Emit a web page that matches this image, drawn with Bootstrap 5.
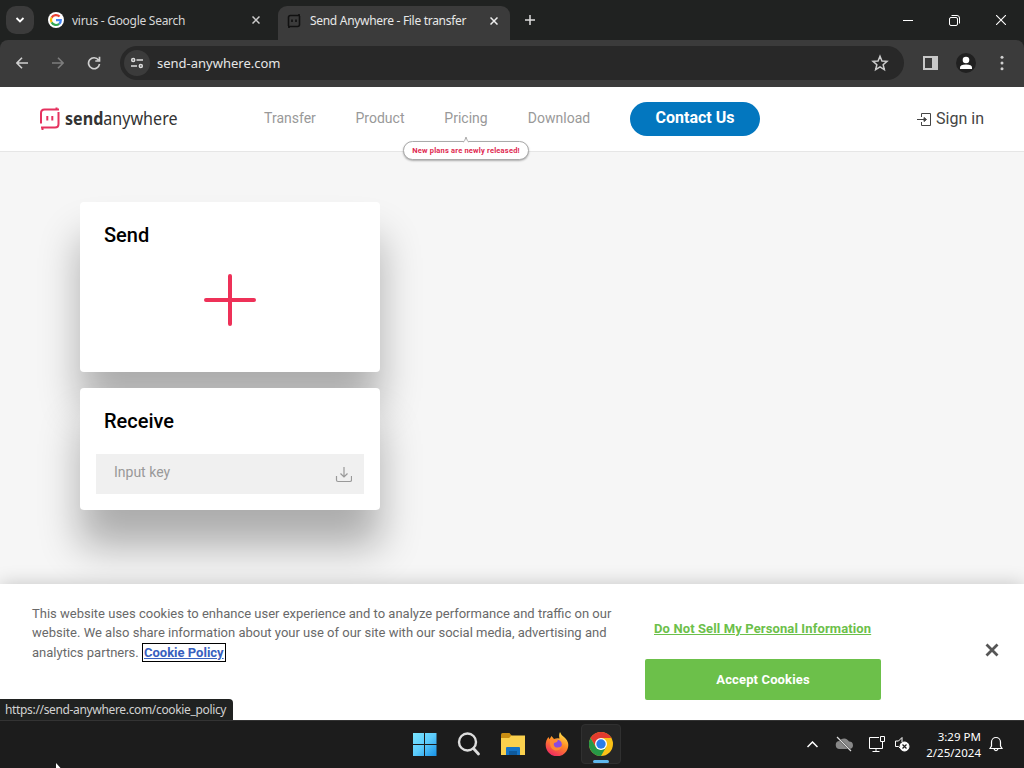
<!DOCTYPE html>
<html lang="en">
<head>
    <meta charset="UTF-8">
    <meta name="viewport" content="width=device-width, initial-scale=1.0">
    <title>Send Anywhere - File transfer</title>
    <!-- Bootstrap CSS -->
    <link href="https://cdn.jsdelivr.net/npm/bootstrap@5.3.0/dist/css/bootstrap.min.css" rel="stylesheet">
    <style>
        body {
            width: 1024px;
            height: 768px;
            overflow: hidden;
            font-family: Roboto, "Liberation Sans", sans-serif;
            background-color: #f6f6f6;
        }
        svg {
            display: block;
            flex: none;
        }
        /* browser window */
        .tab-strip {
            height: 40px;
            background-color: #202221;
            color: #d6d6d6;
            font: 12px "Noto Sans", sans-serif;
        }
        .tab-search {
            width: 28px;
            height: 28px;
            margin: 6px 0 0 6px;
            border-radius: 10px;
            background-color: #3b3b3b;
        }
        .tab-idle {
            width: 226px;
            height: 40px;
            padding-left: 14px;
        }
        .tab-idle span, .tab-active span {
            white-space: nowrap;
        }
        .tab-idle span {
            letter-spacing: -0.28px;
            margin-left: 8px;
        }
        .tab-active {
            width: 232px;
            height: 34px;
            margin: 6px 0 0 18px;
            padding: 0 8px 5px 9px;
            border-radius: 9px 9px 0 0;
            background-color: #3b3b3b;
            color: #e8e8e8;
        }
        .tab-active span {
            margin-left: 9px;
            letter-spacing: -0.3px;
        }
        .new-tab {
            padding-left: 15px;
        }
        .window-buttons {
            gap: 36px;
            padding-right: 18px;
        }
        .address-row {
            height: 47px;
            padding: 0 10px 2px;
            background-color: #3b3b3b;
            border-radius: 8px 8px 0 0;
        }
        .address-wrap {
            background-color: #202221;
        }
        .nav-slot {
            width: 24px;
        }
        .nav-buttons {
            gap: 12px;
        }
        .omnibox {
            width: 784px;
            height: 34px;
            margin-left: 14px;
            padding: 0 15px 0 4px;
            border-radius: 17px;
            background-color: #282828;
            color: #e6e6e6;
            font: 13px "Noto Sans", sans-serif;
        }
        .site-info {
            width: 26px;
            height: 26px;
            margin-right: 7px;
            border-radius: 50%;
            background-color: #3b3b3b;
        }
        .address-tools {
            padding-right: 9px;
        }
        .account-icon {
            margin: 0 23px 0 18px;
        }
        /* site header */
        .site-header {
            height: 65px;
            padding: 0 40px 0 39px;
            background-color: #fff;
            border-bottom: 1px solid #e6e6e6;
        }
        .site-menu {
            margin-left: 67px;
            padding-bottom: 2px;
            font-size: 14px;
            color: #999;
        }
        .site-menu a {
            color: #999;
            text-decoration: none;
            text-align: center;
        }
        .menu-transfer { width: 84px; }
        .menu-product { width: 96px; }
        .menu-pricing { width: 76px; }
        .menu-download { width: 110px; }
        .plan-note {
            position: absolute;
            top: 33px;
            left: -25px;
            width: 126px;
            height: 19px;
            border: 1px solid #aaa;
            border-radius: 10px;
            background-color: #fff;
            box-shadow: 0 1px 2px rgba(0, 0, 0, .3);
            color: #e0284f;
            font-size: 7.5px;
            font-weight: 700;
            line-height: 18px;
            letter-spacing: .2px;
            white-space: nowrap;
        }
        .plan-note svg {
            position: absolute;
            left: 59px;
            top: -6px;
        }
        .btn-contact {
            width: 130px;
            height: 34px;
            margin-left: 16px;
            padding: 0 0 3px;
            border: 0;
            border-radius: 17px;
            background-color: #0377bf;
            color: #fff;
            font-size: 16px;
            font-weight: 700;
            line-height: 31px;
        }
        .sign-in {
            font-size: 16px;
            color: #444;
        }
        /* transfer widgets */
        .site-main {
            height: 432px;
            padding: 50px 0 0 80px;
        }
        .transfer-box {
            width: 300px;
            border-radius: 4px;
            background-color: #fff;
            box-shadow: 0 36px 40px rgba(0, 0, 0, .3);
            color: #000;
        }
        .box-send {
            height: 170px;
        }
        .box-receive {
            height: 122px;
            margin-top: 16px;
            position: relative;
        }
        .transfer-box h2 {
            margin: 0;
            padding: 21px 24px 0;
            font-size: 20px;
            font-weight: 500;
            line-height: 25px;
        }
        .send-plus {
            margin: 26px auto 0;
        }
        .key-field {
            width: 268px;
            height: 40px;
            margin: 20px 16px 0;
            padding: 0 12px 0 18px;
            background-color: #f0f0f0;
            color: #999;
            font-size: 14px;
        }
        .key-field span {
            padding-bottom: 4px;
        }
        /* cookie banner */
        .cookie-bar {
            position: relative;
            height: 136px;
            background-color: #fff;
            box-shadow: 0 0 18px rgba(0, 0, 0, .2);
            color: #696969;
            font-size: 13px;
            line-height: 19.5px;
        }
        .cookie-text {
            width: 613px;
            margin: 0;
            padding: 19.6px 0 0 32px;
            white-space: nowrap;
        }
        .cookie-text a {
            margin-left: 2px;
            color: #3860be;
            font-weight: 700;
            outline: 1px solid #000;
            outline-offset: 1px;
        }
        .cookie-actions {
            width: 236px;
            margin-left: 32px;
            padding-top: 35px;
        }
        .cookie-actions a {
            margin-left: 9px;
            color: #6cc04a;
            font-weight: 700;
            letter-spacing: .12px;
            white-space: nowrap;
        }
        .btn-accept {
            height: 41px;
            margin-top: 20px;
            padding: 2px 0 0;
            border: 0;
            border-radius: 2px;
            background-color: #6cc04a;
            color: #fff;
            font-size: 13px;
            font-weight: 700;
            letter-spacing: .14px;
        }
        .cookie-close {
            margin: 0 25px 4px auto;
        }
        .status-url {
            position: absolute;
            left: 0;
            bottom: 0;
            width: 233px;
            height: 21px;
            padding-left: 5px;
            border-radius: 0 4px 0 0;
            background-color: #202221;
            color: #d2d2d2;
            font: 12px/21px "Noto Sans", sans-serif;
            letter-spacing: -.34px;
            white-space: nowrap;
        }
        /* taskbar */
        .task-bar {
            position: relative;
            height: 48px;
            padding-bottom: 1px;
            background-color: #1c1c1c;
            border-top: 1px solid #333;
            color: #fff;
        }
        .task-apps {
            margin-left: 405px;
        }
        .task-cell {
            width: 40px;
            height: 40px;
            margin-right: 4px;
        }
        .task-cell.is-open {
            position: relative;
            border-radius: 4px;
            border: 1px solid #303030;
            background-color: #262626;
        }
        .task-cell.is-open::after {
            content: "";
            position: absolute;
            left: 11px;
            bottom: 0;
            width: 16px;
            height: 3px;
            border-radius: 2px;
            background-color: #5fb8ee;
        }
        .task-tray {
            padding-right: 21px;
        }
        .task-cloud {
            margin: 0 15px 0 17px;
        }
        .task-clock {
            width: 62px;
            margin-left: 8px;
            padding-top: 1px;
            font: 11.5px/16px "Noto Sans", sans-serif;
            letter-spacing: .02px;
            text-align: right;
            white-space: nowrap;
        }
        .cursor-tip {
            position: absolute;
            left: 56px;
            bottom: 0;
        }
    </style>
</head>
<body>
<!-- Tabs -->
<div class="tab-strip d-flex">
    <div class="tab-search d-flex align-items-center justify-content-center">
        <svg width="10" height="8" viewBox="0 0 10 8" fill="none" stroke="#fff" stroke-width="1.8"><path d="M1.5 2 5 5.5 8.5 2"/></svg>
    </div>
    <div class="tab-idle d-flex align-items-center">
        <svg width="16" height="16" viewBox="0 0 16 16" fill="none" stroke-width="2.2">
            <circle cx="8" cy="8" r="8" fill="#fff"/>
            <path d="M11.6 4.6A5 5 0 0 0 3.6 5.6" stroke="#ea4335"/>
            <path d="M3.6 5.6a5 5 0 0 0 0 4.8" stroke="#fbbc05"/>
            <path d="M3.6 10.4a5 5 0 0 0 7.6 1.4" stroke="#34a853"/>
            <path d="M11.2 11.8A4.6 4.6 0 0 0 12.8 8.2H8" stroke="#4285f4"/>
        </svg>
        <span>virus - Google Search</span>
        <svg class="ms-auto" width="8" height="8" viewBox="0 0 8 8" stroke="#ccc" stroke-width="1.5"><path d="m.5.5 7 7m0-7-7 7"/></svg>
    </div>
    <div class="tab-active d-flex align-items-center">
        <svg width="14" height="14" viewBox="0 0 14 14" fill="none" stroke="#111" stroke-width="1.6">
            <path d="M1.500 12V3.500q0-2 2-2H13M12.500 2v8.500q0 2-2 2H1M12 0v2M2 12v2M5 5.500V8M9 5.500V8"/>
        </svg>
        <span>Send Anywhere - File transfer</span>
        <svg class="ms-auto me-1" width="8" height="8" viewBox="0 0 8 8" stroke="#eee" stroke-width="1.5"><path d="m.5.5 7 7m0-7-7 7"/></svg>
    </div>
    <div class="new-tab d-flex align-items-center">
        <svg width="10" height="10" viewBox="0 0 10 10" stroke="#ddd" stroke-width="1.5"><path d="M5 0v10M0 5h10"/></svg>
    </div>
    <div class="window-buttons d-flex align-items-center ms-auto">
        <svg width="10" height="10" viewBox="0 0 10 10" stroke="#fff"><path d="M0 5.5h10"/></svg>
        <svg width="11" height="11" viewBox="0 0 11 11" fill="none" stroke="#fff">
            <rect x=".5" y="2.5" width="8" height="8" rx="1.5"/><path d="M2.500.5H8q2.500 0 2.500 2.500v5.500"/>
        </svg>
        <svg width="10" height="10" viewBox="0 0 10 10" stroke="#fff" stroke-width="1.1"><path d="m0 0 10 10m0-10L0 10"/></svg>
    </div>
</div>

<!-- Address bar -->
<div class="address-wrap">
    <div class="address-row d-flex align-items-center">
        <div class="nav-buttons d-flex align-items-center">
            <div class="nav-slot d-flex justify-content-center">
                <svg width="12" height="12" viewBox="0 0 12 12" fill="none" stroke="#d0d0d0" stroke-width="1.6"><path d="M12 6H1M6 .8.900 6 6 11.200"/></svg>
            </div>
            <div class="nav-slot d-flex justify-content-center">
                <svg width="12" height="12" viewBox="0 0 12 12" fill="none" stroke="#7d7d7d" stroke-width="1.6"><path d="M0 6h11M6 .8 11.100 6 6 11.200"/></svg>
            </div>
            <div class="nav-slot d-flex justify-content-center">
                <svg width="14" height="14" viewBox="0 0 14 14" fill="none" stroke="#d0d0d0" stroke-width="1.700"><path d="M11.500 4A5.500 5.500 0 1 0 12.500 8M12.500.8v4.200H8.300"/></svg>
            </div>
        </div>
        <div class="omnibox d-flex align-items-center">
            <div class="site-info d-flex align-items-center justify-content-center">
                <svg width="14" height="12" viewBox="0 0 14 12" fill="none" stroke="#ddd" stroke-width="1.5"><circle cx="3.200" cy="3" r="1.500"/><path d="M6.500 3H13M1 9h6"/><circle cx="10.800" cy="9" r="1.500"/></svg>
            </div>
            <span>send-anywhere.com</span>
            <svg class="ms-auto" width="18" height="18" viewBox="0 0 24 24" fill="none" stroke="#ccc" stroke-width="2"><path d="m12 3 2.600 6.300 6.700.5-5.100 4.400 1.600 6.600-5.800-3.600-5.800 3.600 1.600-6.600-5.100-4.400 6.700-.5z"/></svg>
        </div>
        <div class="address-tools d-flex align-items-center ms-auto">
            <svg width="15" height="14" viewBox="0 0 15 14"><rect x="1" y="1" width="13" height="12" fill="none" stroke="#c8c8c8" stroke-width="2"/><path fill="#c8c8c8" d="M9 1h5v12H9z"/></svg>
            <svg class="account-icon" width="20" height="20" viewBox="0 0 20 20"><circle cx="10" cy="10" r="10" fill="#202020"/><circle cx="10" cy="7" r="3.300" fill="#fff"/><path d="M4 16v-1.500Q4 11.500 10 11.500t6 3V16z" fill="#fff"/></svg>
            <svg width="6" height="16" viewBox="0 0 6 16" fill="#d0d0d0"><circle cx="3" cy="2.300" r="1.500"/><circle cx="3" cy="8" r="1.500"/><circle cx="3" cy="13.700" r="1.500"/></svg>
        </div>
    </div>
</div>

<!-- Site header -->
<header class="site-header d-flex align-items-center">
    <svg width="142" height="26" viewBox="0 0 142 26">
        <g fill="none" stroke="#e5325f" stroke-width="2">
            <path d="M2 17.500V7q0-3.500 3.500-3.500H20M19.500 6v12q0 3.500-3.500 3.500H2"/>
            <path d="M8.300 10v4.500M13.300 10v4.500"/>
            <path d="M17.500 1.500v2M3.500 21.500V24"/>
        </g>
        <text transform="translate(26 19) scale(.87 1)" font-family="'Noto Sans', sans-serif" font-size="18.500" fill="#333"><tspan font-weight="700">send</tspan>anywhere</text>
    </svg>
    <nav class="site-menu d-flex">
        <a class="menu-transfer" href="#">Transfer</a>
        <a class="menu-product" href="#">Product</a>
        <div class="menu-pricing position-relative text-center">
            <a href="#">Pricing</a>
            <div class="plan-note text-center">New plans are newly released!
                <svg width="6" height="7" viewBox="0 0 6 7" fill="#fff" stroke="#aaa"><path d="M0 6.500Q2 5 3 1q1 4 3 5.500"/></svg>
            </div>
        </div>
        <a class="menu-download" href="#">Download</a>
    </nav>
    <a class="btn btn-contact" href="#">Contact Us</a>
    <a class="sign-in d-flex align-items-center ms-auto text-decoration-none" href="#">
        <svg class="me-1" width="15" height="15" viewBox="0 0 15 15" fill="none" stroke="#444"><path d="M4.500 5V1.500h9v12h-9V10M0 7.500h8"/><path fill="#444" d="M7 5.500 9.500 7.500 7 9.500z"/></svg>
        Sign in
    </a>
</header>

<!-- Send and receive -->
<main class="site-main">
    <section class="transfer-box box-send">
        <h2>Send</h2>
        <svg class="send-plus" width="52" height="52" viewBox="0 0 52 52" stroke="#ee3158" stroke-width="4" stroke-linecap="round"><path d="M26 2v48M2 26h48"/></svg>
    </section>
    <section class="transfer-box box-receive">
        <h2>Receive</h2>
        <div class="key-field d-flex align-items-center justify-content-between">
            <span>Input key</span>
            <svg width="17" height="17" viewBox="0 0 17 17" fill="none" stroke="#999" stroke-width="1.200"><path d="M9 1v10M5.500 7.500 9 11l3.500-3.500M1.500 10v4q0 1.500 1.500 1.500h12q1.500 0 1.500-1.500v-4"/></svg>
        </div>
    </section>
</main>

<!-- Cookie banner -->
<div class="cookie-bar d-flex">
    <p class="cookie-text">This website uses cookies to enhance user experience and to analyze performance and traffic on our<br>website. We also share information about your use of our site with our social media, advertising and<br>analytics partners. <a href="#">Cookie Policy</a></p>
    <div class="cookie-actions d-flex flex-column">
        <a href="#">Do Not Sell My Personal Information</a>
        <button class="btn btn-accept" type="button">Accept Cookies</button>
    </div>
    <svg class="cookie-close align-self-center" width="14" height="14" viewBox="0 0 14 14" stroke="#565656" stroke-width="2.800"><path d="m1.500 1.500 11 11m0-11-11 11"/></svg>
    <div class="status-url">https://send-anywhere.com/cookie_policy</div>
</div>

<!-- Taskbar -->
<div class="task-bar d-flex align-items-center">
    <div class="task-apps d-flex">
        <div class="task-cell d-flex align-items-center justify-content-center">
            <svg width="24" height="24" viewBox="0 0 24 24">
                <defs><linearGradient id="winFill" x1="0" y1="0" x2="24" y2="24" gradientUnits="userSpaceOnUse"><stop stop-color="#7be6ff"/><stop offset=".5" stop-color="#5ccbfb"/><stop offset="1" stop-color="#1590e6"/></linearGradient></defs>
                <path fill="url(#winFill)" d="M0 1h11v11H0zM12 1h11.500v11H12zM0 13h11v11H0zM12 13h11.500v11H12z"/>
            </svg>
        </div>
        <div class="task-cell d-flex align-items-center justify-content-center">
            <svg width="24" height="24" viewBox="0 0 24 24"><circle cx="10.500" cy="10" r="8.500" fill="#181818" stroke="#dcdcdc" stroke-width="2.400"/><path d="m16.500 16.500 5 5.500" stroke="#dcdcdc" stroke-width="2.800" stroke-linecap="round"/></svg>
        </div>
        <div class="task-cell d-flex align-items-center justify-content-center">
            <svg width="24" height="24" viewBox="0 0 24 24"><path fill="#c98d12" d="M0 2.500q0-1.500 1.500-1.500h7L11 4v4H0z"/><path fill="#fad04d" d="M0 6h8l2.500-2.500H24V23H0z"/><path fill="#1473c6" d="M5 16q0-1 1-1h12q1 0 1 1v7H5z"/><path fill="#0e5a9e" d="M8 19h8v4H8z"/></svg>
        </div>
        <div class="task-cell d-flex align-items-center justify-content-center">
            <svg width="24" height="24" viewBox="0 0 24 24">
                <defs><linearGradient id="foxFill" x1="18" y1="1" x2="6" y2="23" gradientUnits="userSpaceOnUse"><stop stop-color="#ffe14a"/><stop offset=".45" stop-color="#ff8a24"/><stop offset="1" stop-color="#f02962"/></linearGradient></defs>
                <path fill="url(#foxFill)" d="M15 0q1 3 4 5 4 3 4.300 8A11.300 11.300 0 0 1 .7 13Q.7 8 3.500 5l1 2.300L6.500 4 9 7q3-1 5.500-.5Q13.500 3 15 0z"/>
                <circle cx="12" cy="12.500" r="4.800" fill="#8a4be0"/>
                <path fill="#ff8a30" d="M5 8q4-2 8 .5-1 2-4 2.500-1 2 1 4 3 1.500 7-1-2 5-7 4.500Q4 17 5 8z"/>
            </svg>
        </div>
        <div class="task-cell is-open d-flex align-items-center justify-content-center">
            <svg width="24" height="24" viewBox="0 0 24 24">
                <circle cx="12" cy="12" r="12" fill="#fbc116"/>
                <path fill="#e33b2e" d="M1.600 6A12 12 0 0 1 22.400 6H12L6.800 15z"/>
                <path fill="#279847" d="M1.600 6A12 12 0 0 0 12 24l5.200-9-5.200 3-5.200-3z"/>
                <circle cx="12" cy="12" r="6" fill="#fff"/><circle cx="12" cy="12" r="4.700" fill="#2b7de9"/>
            </svg>
        </div>
    </div>
    <div class="task-tray d-flex align-items-center ms-auto">
        <svg width="11" height="7" viewBox="0 0 11 7" fill="none" stroke="#fff" stroke-width="1.5"><path d="m.5 6 5-5 5 5"/></svg>
        <svg class="task-cloud" width="19" height="16" viewBox="0 0 19 16"><path fill="#888" d="M5 13a4 4 0 0 1-.5-8A5.500 5.500 0 0 1 14 5.500 3.800 3.800 0 0 1 15 13z"/><path d="m2 1 14 14" stroke="#1c1c1c" stroke-width="2"/><path d="m2 1 14 14" stroke="#ddd" stroke-width="1.200"/></svg>
        <svg width="17" height="17" viewBox="0 0 17 17" fill="none" stroke="#fff"><path d="M10 1.500H.5v11h13V8M7 12.500v3M3.500 15.500h7"/><path d="M11.500.5h4v5h-4zM13.500 5.500V8"/></svg>
        <svg class="ms-2" width="17" height="16" viewBox="0 0 17 16" fill="none" stroke="#fff"><path d="M8 1.500 4.500 5h-3v5.500h3L6 12M8 1.500V6"/><circle cx="10.500" cy="10.500" r="4.500" fill="#fff"/><path d="m8.500 8.500 4 4m0-4-4 4" stroke="#1c1c1c" stroke-width="1.200"/></svg>
        <div class="task-clock">3:29 PM<br>2/25/2024</div>
        <svg class="ms-2" width="14" height="16" viewBox="0 0 14 16" fill="none" stroke="#fff" stroke-width="1.200"><path d="M1 12.500 2.500 10V6a4.500 4.500 0 0 1 9 0v4l1.500 2.500zM5 13q2 3.500 4 0"/></svg>
    </div>
    <svg class="cursor-tip" width="5" height="5" viewBox="0 0 5 5"><path fill="#fff" d="M0 0v5h4.500z"/></svg>
</div>

<!-- Bootstrap JS -->
<script src="https://cdn.jsdelivr.net/npm/bootstrap@5.3.0/dist/js/bootstrap.bundle.min.js"></script>
</body>
</html>
